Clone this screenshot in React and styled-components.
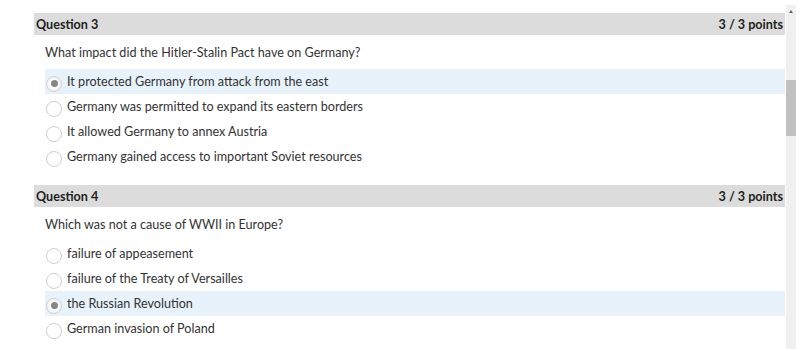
import styled, { createGlobalStyle } from "styled-components";

const GlobalStyle = createGlobalStyle`
  html, body {
    margin: 0;
    padding: 0;
    background: #ffffff;
  }
  body {
    font-family: Lato, "Open Sans", sans-serif;
    color: #333333;
  }
`;

const Page = styled.div`
  display: flex;
  width: 800px;
  height: 351px;
  overflow: hidden;
`;

const Content = styled.div`
  width: 751px;
  margin-left: 34px;
  padding-top: 13px;
  display: flex;
  flex-direction: column;
  gap: 16px;
`;

const Question = styled.section`
  display: flex;
  flex-direction: column;
`;

const Header = styled.div`
  height: 22px;
  background: #dcdcdc;
  display: flex;
  align-items: center;
  justify-content: space-between;
  padding: 0 2px;
  font-size: 12.6px;
  font-weight: 700;
  color: #1e1f20;
`;

const Prompt = styled.div`
  height: 34px;
  padding-left: 11px;
  display: flex;
  align-items: center;
  font-size: 12.6px;
`;

const Option = styled.div`
  height: 25px;
  margin-left: 11px;
  display: flex;
  align-items: center;
  gap: 5px;
  background: ${(p) => (p.$selected ? "#e8f2fb" : "transparent")};
  font-size: 12.6px;
`;

const Radio = styled.span`
  box-sizing: border-box;
  flex: none;
  width: 16px;
  height: 16px;
  margin-left: 1px;
  margin-top: 4px;
  border-radius: 50%;
  border: 1px solid #cfcfcf;
  background: #fff;
  display: flex;
  align-items: center;
  justify-content: center;
  box-shadow: ${(p) => (p.$checked ? "inset 0 0 0 2px #f4f4f4" : "none")};
  &::after {
    content: "";
    display: ${(p) => (p.$checked ? "block" : "none")};
    width: 7px;
    height: 7px;
    border-radius: 50%;
    background: #868686;
  }
`;

const Scrollbar = styled.div`
  width: 10px;
  margin-left: 1px;
  margin-top: 5px;
  height: 344px;
  background: #f0f0f0;
  position: relative;
`;

const Arrow = styled.div`
  position: absolute;
  top: 5px;
  left: 3px;
  width: 0;
  height: 0;
  border-left: 2px solid transparent;
  border-right: 2px solid transparent;
  border-bottom: 3px solid #606060;
`;

const Thumb = styled.div`
  position: absolute;
  top: 75px;
  left: 0;
  width: 10px;
  height: 56px;
  background: #c1c1c1;
`;

const questions = [
  {
    n: 3,
    prompt: "What impact did the Hitler-Stalin Pact have on Germany?",
    answer: 0,
    options: [
      "It protected Germany from attack from the east",
      "Germany was permitted to expand its eastern borders",
      "It allowed Germany to annex Austria",
      "Germany gained access to important Soviet resources",
    ],
  },
  {
    n: 4,
    prompt: "Which was not a cause of WWII in Europe?",
    answer: 2,
    options: [
      "failure of appeasement",
      "failure of the Treaty of Versailles",
      "the Russian Revolution",
      "German invasion of Poland",
    ],
  },
];

export default function App() {
  return (
    <Page>
      <GlobalStyle />
      <Content>
        {questions.map((q) => (
          <Question key={q.n}>
            <Header>
              <span>Question {q.n}</span>
              <span>3 / 3 points</span>
            </Header>
            <Prompt>{q.prompt}</Prompt>
            {q.options.map((o, i) => (
              <Option key={o} $selected={i === q.answer}>
                <Radio $checked={i === q.answer} />
                <span>{o}</span>
              </Option>
            ))}
          </Question>
        ))}
      </Content>
      <Scrollbar>
        <Arrow />
        <Thumb />
      </Scrollbar>
    </Page>
  );
}
